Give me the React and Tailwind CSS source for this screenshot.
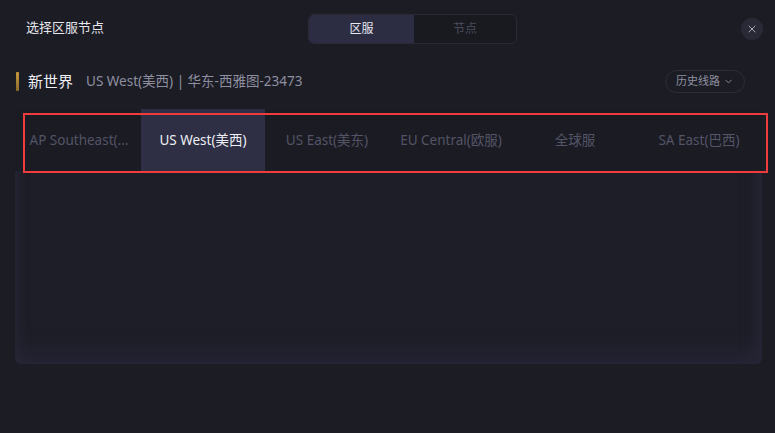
import React from "react";
import { X, ChevronDown } from "lucide-react";

const regions = [
  "AP Southeast(...",
  "US West(美西)",
  "US East(美东)",
  "EU Central(欧服)",
  "全球服",
  "SA East(巴西)",
];

const App = () => {
  const active = 1;

  return (
    <main
      className="w-[775px] h-[433px] bg-[#1c1c25] text-white overflow-hidden relative"
      style={{ fontFamily: '"Noto Sans", "Noto Sans CJK SC", sans-serif' }}
    >
      {/* HEADER */}
      <header className="h-[58px] flex items-center px-[26px] relative">
        <h1 className="text-[13px] text-[#e6e6ee] -mt-[2px]">选择区服节点</h1>

        <div className="absolute left-[308px] top-[14px] flex h-[30px] w-[209px] rounded-[6px] border border-[#2a2a36] bg-[#191920] overflow-hidden">
          <button className="w-[105px] bg-[#2c2d43] text-[12px] text-[#e8e8f0]">区服</button>
          <button className="flex-1 text-[12px] text-[#4c4d5c]">节点</button>
        </div>

        <button className="absolute left-[741px] top-[18px] w-[22px] h-[22px] rounded-full bg-[#2a2a36] flex items-center justify-center text-[#a6a6b4]">
          <X size={12} strokeWidth={2} />
        </button>
      </header>

      {/* CURRENT SERVER */}
      <section className="h-[46px] flex items-center pl-[16px] pr-[30px]">
        <span className="w-[3px] h-[19px] bg-gradient-to-b from-[#c79a3e] to-[#8a6a2c] rounded-[1px] mr-[9px]"></span>
        <span className="text-[15px] text-[#f0f0f5] mr-[13px]">新世界</span>
        <span className="text-[13.5px] text-[#8e8fa0]">US West(美西) | 华东-西雅图-23473</span>
        <button className="ml-auto h-[23px] px-[10px] rounded-full border border-[#2e2e3b] flex items-center gap-[3px] text-[11px] text-[#9091a0]">
          历史线路 <ChevronDown size={11} />
        </button>
      </section>

      {/* REGION PANEL */}
      <section className="mx-[15px] mt-[5px] w-[747px] h-[255px] rounded-[6px] bg-[#1e1e28] shadow-[inset_10px_0_14px_-8px_#262637,inset_-12px_0_16px_-8px_#272738,inset_0_-22px_24px_-14px_#282839] overflow-hidden">
        <div className="flex h-[62px] pl-[2px] bg-[#1b1b23]">
          {regions.map((name, i) => (
            <div
              key={name}
              className={
                i === active
                  ? "w-[124px] shrink-0 flex items-center justify-center text-[13.5px] bg-[#2e2e44] text-[#eeeef4]"
                  : "w-[124px] shrink-0 flex items-center justify-center text-[13.5px] text-[#535466]"
              }
            >
              {name}
            </div>
          ))}
        </div>
      </section>

      {/* highlight frame */}
      <div className="absolute left-[23px] top-[113px] w-[745px] h-[60px] border-2 border-[#ef3d3d] pointer-events-none"></div>
    </main>
  );
};

export default App;
